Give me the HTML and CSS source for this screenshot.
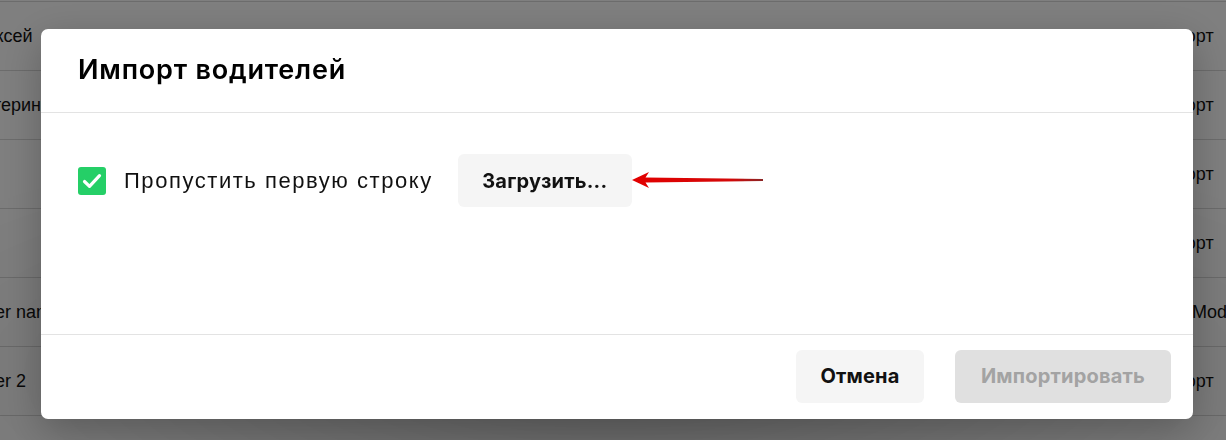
FILE: index.html
```html
<!DOCTYPE html>
<html lang="ru">
<head>
    <meta charset="UTF-8">
    <title>Импорт водителей</title>
    <link rel="stylesheet" href="styles.css">
</head>
<body>

<!-- table behind the dialog -->
<div class="drivers-table">
    <div class="row">
        <span>Алексей</span><span>1.00</span><span>375293473611</span><span>pk.link/ld/driver</span><span>mail</span><span>Экспорт</span>
    </div>
    <div class="row">
        <span>Екатерина</span><span>1.00</span><span>375291234567</span><span>pk.link/ld/driver</span><span>mail</span><span>Экспорт</span>
    </div>
    <div class="row">
        <span>-</span><span>1.00</span><span>375297654321</span><span>pk.link/ld/driver</span><span>mail</span><span>Экспорт</span>
    </div>
    <div class="row">
        <span></span><span>1.00</span><span>375290000000</span><span>pk.link/ld/driver</span><span>mail</span><span>Экспорт</span>
    </div>
    <div class="row">
        <span>Driver name</span><span>1.00</span><span>375291112233</span><span>pk.link/ld/driver</span><span>mail</span><span class="cell-shift">Moderator</span>
    </div>
    <div class="row">
        <span>Driver 2</span><span>1.00</span><span>375294445566</span><span>pk.link/ld/driver</span><span>mail</span><span>Экспорт</span>
    </div>
    <div class="row">
        <span>Сергей</span><span>1.00</span><span>375291001553</span><span>pk.link/ld/driver</span><span>mail</span><span>Экспорт</span>
    </div>
</div>

<div class="overlay">
    <div class="modal">
        <div class="modal-header">Импорт водителей</div>

        <div class="modal-body">
            <label class="check">
                <span class="check-box">
                    <svg width="28" height="28" viewBox="0 0 28 28">
                        <path d="M6.5 14.5 L11.5 19.3 L21.5 8.7" fill="none" stroke="#fff" stroke-width="3.2" stroke-linecap="round" stroke-linejoin="round"/>
                    </svg>
                </span>
                Пропустить первую строку
            </label>
            <button class="btn btn-light btn-upload">Загрузить...</button>
            <!-- red pointer arrow -->
            <svg class="pointer" width="134" height="20" viewBox="0 0 134 20">
                <defs>
                    <linearGradient id="shaft" x1="0" x2="1" y1="0" y2="0">
                        <stop offset="0" stop-color="#e20000"/>
                        <stop offset="0.75" stop-color="#d40808"/>
                        <stop offset="1" stop-color="#8a2626"/>
                    </linearGradient>
                </defs>
                <path d="M0 10 L17 2 L13.5 7.6 L131 9 L131 11 L13.5 12.6 L17 18 Z" fill="url(#shaft)"/>
            </svg>
        </div>

        <div class="modal-footer">
            <button class="btn btn-light btn-cancel">Отмена</button>
            <button class="btn btn-disabled" disabled>Импортировать</button>
        </div>
    </div>
</div>

</body>
</html>
```

FILE: styles.css
```css
html, body {
    height: 440px;
    overflow: hidden;
}

body {
    margin: 0;
    padding: 0;
    background-color: #fff;
    font-family: "Liberation Sans", Arial, sans-serif;
    color: #111;
}

/* Background table */
.drivers-table {
    height: 440px;
    overflow: hidden;
    margin-left: -37px;
    padding-top: 1px;
    box-sizing: border-box;
}

.row {
    display: grid;
    grid-template-columns: 172px 193px 447px 256px 115px auto;
    height: 68px;
    align-items: center;
    border-top: 1px solid #d8d8d8;
    font-size: 18px;
    white-space: nowrap;
    color: #111;
}

.cell-shift {
    padding-left: 46px;
}

/* Dimmed overlay */
.overlay {
    position: fixed;
    top: 0;
    left: 0;
    right: 0;
    bottom: 0;
    background: radial-gradient(ellipse 70% 60% at 50% 85%, rgba(0, 0, 0, 0.62), rgba(0, 0, 0, 0.52) 70%, rgba(0, 0, 0, 0.5));
    display: flex;
    align-items: flex-start;
}

.modal {
    width: 1152px;
    height: 390px;
    margin: 29px 0 0 41px;
    background-color: #fff;
    border-radius: 7px;
    box-shadow: 0 12px 40px rgba(0, 0, 0, 0.25);
    display: flex;
    flex-direction: column;
}

.modal-header {
    height: 84px;
    box-sizing: border-box;
    padding: 0 37px 3px;
    display: flex;
    align-items: center;
    border-bottom: 1px solid #e3e3e3;
    font-family: Inter, sans-serif;
    font-size: 27px;
    font-weight: 600;
    letter-spacing: 0.8px;
    color: #000;
}

.modal-body {
    flex: 1;
    display: flex;
    align-items: flex-start;
    padding: 41px 37px 0;
    box-sizing: border-box;
}

.check {
    display: flex;
    align-items: center;
    gap: 18px;
    height: 53px;
    font-size: 22px;
    letter-spacing: 1.55px;
    color: #111;
    margin-right: 25px;
}

.check-box {
    width: 28px;
    height: 28px;
    border-radius: 3px;
    background-color: #25cf67;
    display: flex;
    align-items: center;
    justify-content: center;
}

.btn {
    height: 53px;
    border: none;
    border-radius: 6px;
    padding: 0;
    font-family: Inter, sans-serif;
    font-size: 20px;
    font-weight: 700;
    letter-spacing: 0.2px;
    cursor: pointer;
}

.btn-light {
    background-color: #f5f5f5;
    color: #111;
}

.btn-disabled {
    background-color: #e0e0e0;
    color: #a3a3a3;
    cursor: default;
    width: 216px;
}

.btn-upload {
    width: 174px;
}

.btn-cancel {
    width: 128px;
}

.pointer {
    margin: 16px 0 0 0;
}

.modal-footer {
    height: 85px;
    box-sizing: border-box;
    border-top: 1px solid #e3e3e3;
    display: flex;
    justify-content: flex-end;
    align-items: center;
    gap: 31px;
    padding: 0 22px 2px;
}
```
